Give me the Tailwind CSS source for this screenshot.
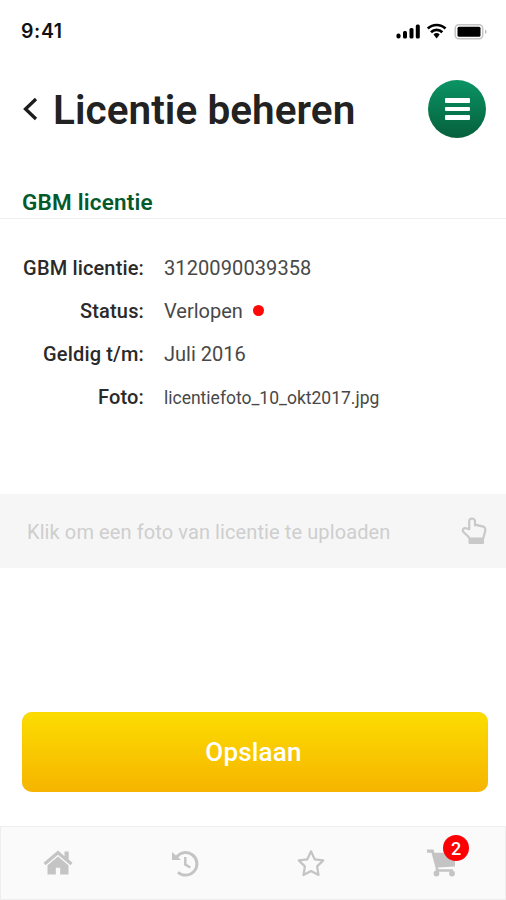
<!DOCTYPE html>
<html lang="nl">
<head>
<meta charset="utf-8">
<title>Licentie beheren</title>
<script src="https://cdn.jsdelivr.net/npm/@tailwindcss/browser@4"></script>
</head>
<body class="bg-white">
<div class="flex h-[900px] w-[506px] flex-col overflow-hidden bg-white font-['Roboto',sans-serif] text-[#222]">
  <!-- Status bar -->
  <div class="flex h-[60px] shrink-0 items-center justify-between pl-[21px] pr-[18px] pt-[3px]">
    <span class="font-['Inter',sans-serif] text-[19.5px] font-semibold tracking-[0.600px] text-[#111]">9:41</span>
    <svg class="mb-[2px] h-5 w-[93px]" viewBox="0 0 93 20" fill="none">
      <g fill="#000">
        <rect x="1.5" y="12.5" width="4" height="5" rx="1.8"/>
        <rect x="8" y="10" width="4" height="7.5" rx="1.5"/>
        <rect x="14.5" y="7" width="4" height="10.5" rx="1.5"/>
        <rect x="20.8" y="3.5" width="4" height="14" rx="1.5"/>
        <path d="M38.500 13.500a4.600 4.600 0 0 1 6.200 0L41.600 17.500z"/>
      </g>
      <path d="M32.800 7.500a12.900 12.900 0 0 1 17.700 0M36 11.200a8.200 8.200 0 0 1 11.300 0" stroke="#000" stroke-width="2.700"/>
      <rect x="60.200" y="3.700" width="27.500" height="14.100" rx="3.500" stroke="#c4c4c4" stroke-width="1.500"/>
      <rect x="62.500" y="5.800" width="23" height="10" rx="1.500" fill="#000"/>
      <path d="M90 8.500c2 .8 2 3.700 0 4.500z" fill="#bbb"/>
    </svg>
  </div>
  <!-- Page header -->
  <header class="flex h-[98px] shrink-0 items-center pl-[22px] pr-[20px]">
    <svg class="h-6 w-4" viewBox="0 0 16 24" fill="none" stroke="#1c1c1c" stroke-width="3.300"><path d="M14 2 3.500 12 14 22"/></svg>
    <h1 class="ml-[15px] whitespace-nowrap pt-px text-[40.500px] font-semibold leading-[48px] tracking-[0.050px]">Licentie beheren</h1>
    <button class="ml-auto flex size-[58px] flex-col items-center justify-center gap-1 rounded-full bg-linear-to-b from-[#0b9465] to-[#06603c]">
      <span class="h-[4.500px] w-[25px] rounded-[1px] bg-white"></span>
      <span class="h-[4.500px] w-[25px] rounded-[1px] bg-white"></span>
      <span class="h-[4.500px] w-[25px] rounded-[1px] bg-white"></span>
    </button>
  </header>
  <h2 class="flex h-[61px] shrink-0 items-end border-b border-[#f0f0f0] pb-[3px] pl-[22px] text-[22.500px] font-semibold leading-[26px] text-[#055a2c] tracking-[0.200px]">GBM licentie</h2>
  <!-- Licence details -->
  <dl class="grid h-[275px] shrink-0 auto-rows-[43.200px] grid-cols-[144px_1fr] content-start items-center gap-x-5 pt-[27px] text-[20px] text-[#484848]">
    <dt class="text-right font-medium tracking-[0.150px] text-[#2a2a2a]">GBM licentie:</dt><dd class="tracking-[0.100px]">3120090039358</dd>
    <dt class="text-right font-medium tracking-[0.150px] text-[#2a2a2a]">Status:</dt><dd class="flex items-center gap-2.5">Verlopen<span class="size-[11px] rounded-full bg-[#ff0808]"></span></dd>
    <dt class="text-right font-medium tracking-[0.150px] text-[#2a2a2a]">Geldig t/m:</dt><dd>Juli 2016</dd>
    <dt class="text-right font-medium tracking-[0.150px] text-[#2a2a2a]">Foto:</dt><dd class="pt-0.5 text-[17.500px]">licentiefoto_10_okt2017.jpg</dd>
  </dl>
  <!-- Upload -->
  <div class="flex h-[74px] shrink-0 items-center justify-between bg-[#f6f6f6] pl-[27px] pr-[19px] text-[20px] text-[#cecece]">
    <span class="pt-0.5 tracking-[0.100px]">Klik om een foto van licentie te uploaden</span>
    <svg class="h-7 w-[26px]" viewBox="0 0 26 28" fill="none" stroke="#c9c9c9" stroke-width="2.200" stroke-linejoin="round">
      <path d="M8.500 21.500C7.500 18.500 4 17 2.200 14.800c-1.200-2.200.6-4 2.800-3.500l3.200 1V4.500c0-4 5.800-4 5.800 0v4c1.500-.8 2.800-.5 3.500.4 1.300-.5 2.300-.3 3.100.6 2.300-.2 3.700.8 3.700 3 0 3.500-1.800 5.500-1.900 9"/>
      <path d="M8 21h14.500v5.500H8z" fill="#c9c9c9" stroke-width="1"/>
    </svg>
  </div>
  <div class="flex h-[258px] shrink-0 flex-col justify-end pb-[34px] pl-[22px] pr-[18px]">
    <button class="h-20 w-full rounded-[10px] bg-linear-to-b from-[#fbdd00] to-[#f6b400] pr-[3px] pt-px text-[26px] font-medium tracking-[0.200px] text-white shadow-[inset_0_0_1px_#edb800]">Opslaan</button>
  </div>
  <!-- Tab bar -->
  <nav class="flex h-[74px] shrink-0 items-center border border-[#eee] bg-[#fafafa] text-[#c4c4c4]">
    <a class="flex w-[114px] justify-center"><svg class="h-[26px] w-[30px]" viewBox="0 0 30 26" fill="currentColor">
      <path d="M15 .5 0.500 12.800l2 2.400L15 4.800l12.500 10.400 2-2.400-3.800-3.300V1.500h-4.200v4.700z"/>
      <path d="M15 6.500 4.500 15.300v9.200h8.300v-6.800h4.400v6.800h8.300v-9.200z"/>
    </svg></a>
    <a class="ml-[13px] flex w-[114px] justify-center"><svg class="h-[27px] w-7" viewBox="0 0 28 27" fill="none" stroke="currentColor" stroke-width="2.900">
      <path d="M5.500 7.200A11.300 11.300 0 1 1 7 22.200"/><path d="M14.300 7v7.500l5 3" stroke-width="2.500"/><path d="M1 2v8h9z" fill="currentColor" stroke="none"/>
    </svg></a>
    <a class="ml-3 flex w-[114px] justify-center"><svg class="h-[28px] w-[30px]" viewBox="0 0 30 28" fill="none" stroke="currentColor" stroke-width="2.200" stroke-linejoin="round">
      <path d="m15 2.300 3.700 8 8.600 1.100-6.200 6 1.400 8.600L15 22l-7.500 4 1.400-8.600-6.200-6 8.600-1.100z"/>
    </svg></a>
    <a class="relative ml-4 flex w-[114px] justify-center"><svg class="h-7 w-[29px]" viewBox="0 0 29 28" fill="currentColor">
      <path d="M0 .5h6.500l1 3.300H28v13.700L11 18.500l.5 1.700H26v2.500H8.500l.3-3L4.500 3.800H0z"/><circle cx="9.500" cy="24.500" r="2.900"/><circle cx="25" cy="24.500" r="2.900"/>
    </svg><span class="absolute left-[59px] top-[-14px] flex size-[26px] items-center justify-center rounded-full bg-[#fc0006] text-[18px] font-medium text-white">2</span></a>
  </nav>
</div>
</body>
</html>
